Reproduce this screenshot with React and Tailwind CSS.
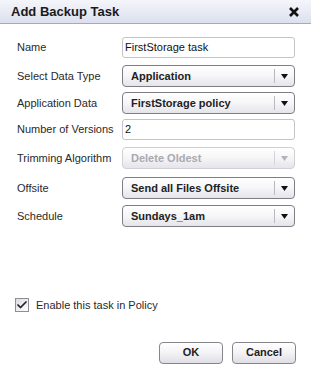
import { Check } from 'lucide-react';

const font = { fontFamily: '"Liberation Sans", Arial, sans-serif' };

/**
 * Select-like box with divider and dropdown arrow
 */
function SelectBox({ value, disabled }) {
  return (
    <div
      className={`flex items-center h-[22px] w-[173px] rounded-[4px] border bg-gradient-to-b from-white via-[#f6f6f8] to-[#e4e4ea] ${
        disabled ? 'border-[#cfcfd4]' : 'border-[#7d7d85]'
      }`}
    >
      <span
        className={`flex-1 pl-[8px] text-[11px] font-bold leading-none ${
          disabled ? 'text-[#a9a9ae]' : 'text-[#222]'
        }`}
      >
        {value}
      </span>
      <span className={`h-[14px] w-px ${disabled ? 'bg-[#d4d4d8]' : 'bg-[#b9b9bf]'}`} />
      <span className="w-[19px] flex justify-center">
        <svg width="7" height="5" viewBox="0 0 7 5">
          <path d="M0 0 L7 0 L3.5 5 Z" fill={disabled ? '#b3b3b8' : '#111'} />
        </svg>
      </span>
    </div>
  );
}

function TextBox({ value }) {
  return (
    <div className="flex items-center h-[21px] w-[173px] rounded-[3px] border border-[#c4c4c8] bg-white pl-[2px] text-[11px] text-[#111]">
      {value}
    </div>
  );
}

function Row({ label, children, className = '' }) {
  return (
    <div className={`flex items-center ${className}`}>
      <span className="w-[105px] text-[11px] text-[#2a2a2a]">{label}</span>
      {children}
    </div>
  );
}

function Button({ children }) {
  return (
    <button className="h-[22px] w-[64px] rounded-[4px] border border-[#85858c] bg-gradient-to-b from-white via-[#f3f3f6] to-[#dedee5] text-[11px] font-bold text-[#222]">
      {children}
    </button>
  );
}

export default function App() {
  return (
    <div className="w-[311px] h-[371px] bg-white flex flex-col" style={font}>
      {/* Title bar */}
      <div className="flex items-center justify-between h-[24px] border-b border-[#a7a9b4] bg-gradient-to-b from-[#f5f6fb] to-[#dcdfee] pl-[11px] pr-[12px]">
        <span className="text-[13px] font-bold text-[#1a1a1a]">Add Backup Task</span>
        <svg width="10" height="10" viewBox="0 0 10 10">
          <path d="M1 1 L9 9 M9 1 L1 9" stroke="#111" strokeWidth="2.6" />
        </svg>
      </div>

      {/* Form */}
      <div className="pl-[17px] flex flex-col">
        <Row label="Name" className="mt-[13px]">
          <TextBox value="FirstStorage task" />
        </Row>
        <Row label="Select Data Type" className="mt-[7px]">
          <SelectBox value="Application" />
        </Row>
        <Row label="Application Data" className="mt-[5px]">
          <SelectBox value="FirstStorage policy" />
        </Row>
        <Row label="Number of Versions" className="mt-[5px]">
          <TextBox value="2" />
        </Row>
        <Row label="Trimming Algorithm" className="mt-[7px]">
          <SelectBox value="Delete Oldest" disabled />
        </Row>
        <Row label="Offsite" className="mt-[8px]">
          <SelectBox value="Send all Files Offsite" />
        </Row>
        <Row label="Schedule" className="mt-[6px]">
          <SelectBox value="Sundays_1am" />
        </Row>
      </div>

      {/* Enable checkbox */}
      <div className="flex items-center mt-[70px] pl-[15px]">
        <span className="flex items-center justify-center w-[14px] h-[14px] border border-[#8e8f94] bg-gradient-to-br from-[#dcdce2] to-white">
          <Check className="w-[12px] h-[12px] text-[#222]" strokeWidth={3.5} />
        </span>
        <span className="ml-[7px] text-[11px] text-[#2a2a2a]">Enable this task in Policy</span>
      </div>

      {/* Buttons */}
      <div className="flex justify-end gap-[9px] pr-[15px] mt-[28px]">
        <Button>OK</Button>
        <Button>Cancel</Button>
      </div>
    </div>
  );
}
